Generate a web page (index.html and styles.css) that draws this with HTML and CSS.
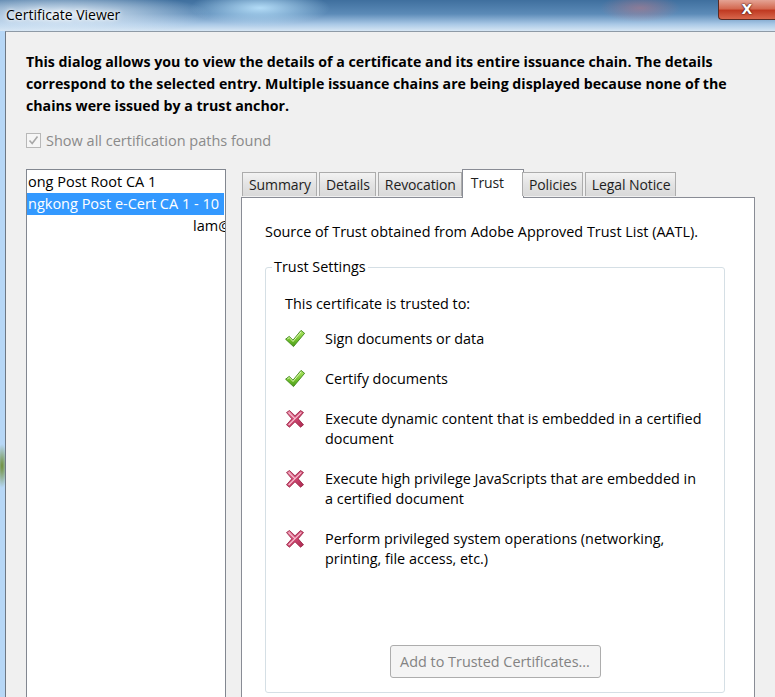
FILE: index.html
```html
<!DOCTYPE html>
<html>
    <head>
        <title>Certificate Viewer</title>
        <link rel="stylesheet" href="styles.css">
    </head>

    <body>
        <svg width="0" height="0" class="defs">
            <defs>
                <linearGradient id="checkFill" x1="0" y1="0" x2="0" y2="1">
                    <stop offset="0" stop-color="#b2e86a"/>
                    <stop offset="0.6" stop-color="#6fbf2a"/>
                    <stop offset="1" stop-color="#4c9a1c"/>
                </linearGradient>
                <linearGradient id="crossFill" x1="0" y1="0" x2="1" y2="1">
                    <stop offset="0" stop-color="#e784a2"/>
                    <stop offset="0.5" stop-color="#cf4670"/>
                    <stop offset="1" stop-color="#a82a50"/>
                </linearGradient>
            </defs>
        </svg>

        <div class="window">
            <div class="titlebar">
                <span class="title">Certificate Viewer</span>
                <span class="closeBtn">X</span>
            </div>

            <div class="frame">
                <div class="edge"></div>
                <div class="client">
                    <p class="intro">
                        This dialog allows you to view the details of a certificate and its entire issuance chain. The details<br>
                        correspond to the selected entry. Multiple issuance chains are being displayed because none of the<br>
                        chains were issued by a trust anchor.
                    </p>

                    <label class="showAll">
                        <span class="checkbox">
                            <svg width="13" height="13" viewBox="0 0 13 13">
                                <path d="M2.5 6.5 L5.2 9.5 L10.5 2.5" fill="none" stroke="#a8a8a8" stroke-width="1.6"/>
                            </svg>
                        </span>
                        Show all certification paths found
                    </label>

                    <div class="main">
                        <div class="pathList">
                            <div class="pathItem">ong Post Root CA 1</div>
                            <div class="pathItem selected">ngkong Post e-Cert CA 1 - 10</div>
                            <div class="pathItem leaf">lam@</div>
                        </div>

                        <div class="tabArea">
                            <div class="tabs">
                                <span class="tab">Summary</span>
                                <span class="tab">Details</span>
                                <span class="tab">Revocation</span>
                                <span class="tab active">Trust</span>
                                <span class="tab">Policies</span>
                                <span class="tab">Legal Notice</span>
                            </div>
                            <div class="tabPanel">
                                <p class="source">Source of Trust obtained from Adobe Approved Trust List (AATL).</p>

                                <fieldset class="trustSettings">
                                    <legend>Trust Settings</legend>
                                    <p class="trustedTo">This certificate is trusted to:</p>

                                    <div class="trustRow">
                                        <svg class="icon" viewBox="0 0 20 20">
                                            <path d="M0.6 10.2 L4.2 7.4 L8 11.2 L16 1.4 L19.6 4.3 L8.5 17.6 Z" fill="url(#checkFill)" stroke="#3b8414" stroke-width="0.9" stroke-linejoin="round"/>
                                            <path d="M2.3 10 L4.3 8.6 L8 12.5 L16.1 2.8" fill="none" stroke="#dcf8b0" stroke-width="1"/>
                                        </svg>
                                        <span>Sign documents or data</span>
                                    </div>
                                    <div class="trustRow">
                                        <svg class="icon" viewBox="0 0 20 20">
                                            <path d="M0.6 10.2 L4.2 7.4 L8 11.2 L16 1.4 L19.6 4.3 L8.5 17.6 Z" fill="url(#checkFill)" stroke="#3b8414" stroke-width="0.9" stroke-linejoin="round"/>
                                            <path d="M2.3 10 L4.3 8.6 L8 12.5 L16.1 2.8" fill="none" stroke="#dcf8b0" stroke-width="1"/>
                                        </svg>
                                        <span>Certify documents</span>
                                    </div>
                                    <div class="trustRow">
                                        <svg class="icon" viewBox="0 0 20 20">
                                            <path d="M1.5 3.5 L4.5 1.5 L10 6.8 L15.5 1.5 L18.5 3.5 L13.2 9.8 L18.5 15.8 L15.5 18.2 L10 12.8 L4.5 18.2 L1.5 15.8 L6.8 9.8 Z" fill="url(#crossFill)" stroke="#94203f" stroke-width="0.8" stroke-linejoin="round"/>
                                            <path d="M3.6 3.4 L10 9.6 L16.4 3.4 M3.6 16 L10 9.6" fill="none" stroke="#f7c2d1" stroke-width="1.2"/>
                                        </svg>
                                        <span>Execute dynamic content that is embedded in a certified<br>document</span>
                                    </div>
                                    <div class="trustRow">
                                        <svg class="icon" viewBox="0 0 20 20">
                                            <path d="M1.5 3.5 L4.5 1.5 L10 6.8 L15.5 1.5 L18.5 3.5 L13.2 9.8 L18.5 15.8 L15.5 18.2 L10 12.8 L4.5 18.2 L1.5 15.8 L6.8 9.8 Z" fill="url(#crossFill)" stroke="#94203f" stroke-width="0.8" stroke-linejoin="round"/>
                                            <path d="M3.6 3.4 L10 9.6 L16.4 3.4 M3.6 16 L10 9.6" fill="none" stroke="#f7c2d1" stroke-width="1.2"/>
                                        </svg>
                                        <span>Execute high privilege JavaScripts that are embedded in<br>a certified document</span>
                                    </div>
                                    <div class="trustRow">
                                        <svg class="icon" viewBox="0 0 20 20">
                                            <path d="M1.5 3.5 L4.5 1.5 L10 6.8 L15.5 1.5 L18.5 3.5 L13.2 9.8 L18.5 15.8 L15.5 18.2 L10 12.8 L4.5 18.2 L1.5 15.8 L6.8 9.8 Z" fill="url(#crossFill)" stroke="#94203f" stroke-width="0.8" stroke-linejoin="round"/>
                                            <path d="M3.6 3.4 L10 9.6 L16.4 3.4 M3.6 16 L10 9.6" fill="none" stroke="#f7c2d1" stroke-width="1.2"/>
                                        </svg>
                                        <span>Perform privileged system operations (networking,<br>printing, file access, etc.)</span>
                                    </div>

                                    <div class="buttonRow">
                                        <button disabled>Add to Trusted Certificates...</button>
                                    </div>
                                </fieldset>
                            </div>
                        </div>
                    </div>
                </div>
            </div>
        </div>
    </body>
</html>
```

FILE: styles.css
```css
body {
    margin: 0;
    width: 775px;
    height: 697px;
    overflow: hidden;
    font-family: "Open Sans", "Noto Sans", sans-serif;
    font-size: 14px;
    color: #1e1e1e;
    background-color: #f0f0f0;
}

p {
    margin: 0;
}

.defs {
    display: block;
    height: 0;
}

.window {
    display: flex;
    flex-direction: column;
    height: 697px;
}

/* title bar, windows 7 style */
.titlebar {
    height: 31px;
    flex-shrink: 0;
    display: flex;
    justify-content: space-between;
    align-items: flex-start;
    background:
        radial-gradient(ellipse 70px 18px at 260px 8px, rgba(190, 230, 255, 0.9), rgba(190, 230, 255, 0) 100%),
        radial-gradient(ellipse 150px 22px at 60px 14px, rgba(235, 244, 252, 0.95), rgba(235, 244, 252, 0) 100%),
        radial-gradient(ellipse 40px 14px at 640px 8px, rgba(200, 120, 130, 0.5), rgba(200, 120, 130, 0) 100%),
        linear-gradient(to bottom, #3f6f9e 0%, #5c8bb8 45%, #a9c8e6 78%, #d6e6f4 100%);
}

.title {
    padding: 5px 0 0 6px;
    font-size: 14px;
    color: #000;
    text-shadow: 0 0 6px #fff, 0 0 3px #fff;
}

.closeBtn {
    width: 56px;
    height: 19px;
    border: 1px solid #5a2a22;
    border-top: none;
    border-right: none;
    border-radius: 0 0 0 4px;
    background: linear-gradient(to bottom, #e4a394 0%, #d46a52 45%, #c03a22 55%, #d8674c 100%);
    color: #fff;
    font-family: "DejaVu Sans", sans-serif;
    font-weight: bold;
    font-size: 14px;
    line-height: 18px;
    text-align: center;
    text-shadow: 0 0 2px #3a1010, 0 0 1px #3a1010;
}

.frame {
    flex: 1;
    display: flex;
    min-height: 0;
}

.edge {
    width: 5px;
    background: radial-gradient(ellipse 6px 22px at 2px 435px, #6f8f3a, rgba(120, 170, 80, 0) 100%), #b7d7f6;
}

.client {
    flex: 1;
    min-width: 0;
    border-left: 1px solid #6e7884;
    border-top: 1px solid #8e9aa6;
    padding-left: 20px;
    display: flex;
    flex-direction: column;
}

.intro {
    margin-top: 19px;
    font-weight: bold;
    font-size: 14.2px;
    line-height: 22px;
    color: #000;
    white-space: nowrap;
}

.showAll {
    margin-top: 15px;
    display: flex;
    align-items: center;
    height: 17px;
    color: #8a8a8a;
    font-size: 14.5px;
}

.checkbox {
    width: 13px;
    height: 13px;
    border: 1px solid #b8b8b8;
    background-color: #f6f6f6;
    margin-right: 5px;
    display: flex;
}

.main {
    margin-top: 20px;
    flex: 1;
    display: flex;
    gap: 15px;
    min-height: 0;
}

.pathList {
    width: 198px;
    border: 1px solid #828790;
    border-bottom: none;
    background-color: #fff;
    overflow: hidden;
    padding-top: 1px;
    font-size: 14.5px;
    color: #000;
}

.pathItem {
    height: 22px;
    line-height: 21px;
    padding-left: 1px;
    white-space: nowrap;
    overflow: hidden;
}

.pathItem.selected {
    background-color: #3399ff;
    color: #fff;
    margin-right: 1px;
}

.pathItem.leaf {
    padding-left: 166px;
}

.tabArea {
    flex: 1;
    margin-right: 20px;
    display: flex;
    flex-direction: column;
}

.tabs {
    display: flex;
    align-items: flex-end;
    padding-left: 1px;
    height: 28px;
    position: relative;
    z-index: 1;
}

.tab {
    height: 23px;
    line-height: 23px;
    padding: 0 5px 0 6px;
    margin-right: 2px;
    margin-bottom: 1px;
    border: 1px solid #acacac;
    border-bottom: none;
    background: linear-gradient(to bottom, #f3f3f3, #e3e3e3 50%, #d9d9d9);
    font-size: 14px;
    letter-spacing: -0.1px;
    color: #1e1e1e;
}

.tab.active {
    height: 28px;
    line-height: 26px;
    margin: 0 0 -1px -2px;
    padding: 0 19px 0 8px;
    background: #fff;
    border-color: #898c95;
}

.tab.active + .tab {
    margin-left: -2px;
}

.tabPanel {
    flex: 1;
    background-color: #fff;
    border: 1px solid #898c95;
    border-bottom: none;
    padding: 24px 0 0 23px;
}

.source {
    line-height: 20px;
    font-size: 14.4px;
    color: #000;
}

.trustSettings {
    width: 420px;
    margin: 15px 0 0 0;
    padding: 0 19px 14px 19px;
    border: 1px solid #d5dfe5;
    border-radius: 3px;
    font-size: 14.4px;
    color: #000;
}

.trustSettings legend {
    margin-left: -13px;
    padding: 0 2px;
    line-height: 20px;
}

.trustedTo {
    margin-top: 17px;
    line-height: 20px;
}

.trustRow {
    display: flex;
    align-items: flex-start;
    margin-top: 20px;
    line-height: 20px;
}

.trustedTo + .trustRow {
    margin-top: 15px;
}

.icon {
    width: 20px;
    height: 20px;
    margin-right: 20px;
    flex-shrink: 0;
}

.buttonRow {
    margin-top: 76px;
    display: flex;
    justify-content: center;
}

button {
    width: 211px;
    height: 33px;
    border: 1px solid #adadad;
    border-radius: 3px;
    background-color: #f4f4f4;
    color: #838383;
    font-family: inherit;
    font-size: 14.4px;
}
```
